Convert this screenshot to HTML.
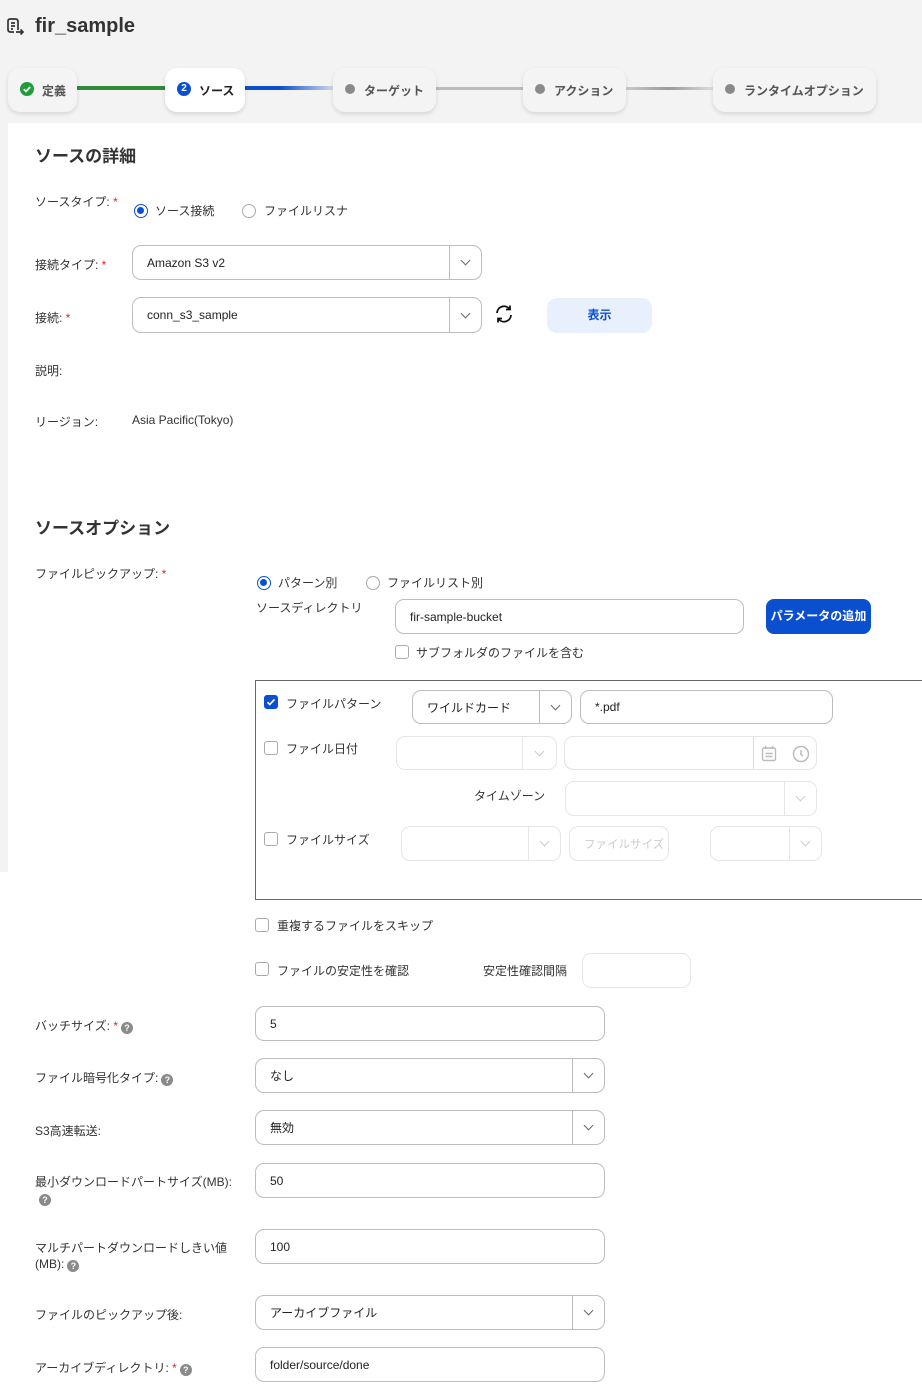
<!DOCTYPE html>
<html><head><meta charset="utf-8"><style>
*{box-sizing:border-box;margin:0;padding:0}
body{width:922px;height:1396px;position:relative;background:#fff;font-family:"Liberation Sans","Noto Sans CJK JP",sans-serif;color:#333;font-size:12px;overflow:hidden}
.a{position:absolute}
.lbl{position:absolute;font-size:12px;color:#333;white-space:nowrap;margin-top:-2px}
.req{color:#e0262b}
.box{position:absolute;border:1px solid #bdbdbd;border-radius:9px;background:#fff;font-size:12px;color:#222;padding-left:14px;display:flex;align-items:center;white-space:nowrap;overflow:hidden}
.dd{position:absolute;right:0;top:0;bottom:0;width:32px;border-left:1px solid #bdbdbd;display:flex;align-items:center;justify-content:center}
.dd:after{content:"";width:6px;height:6px;border-right:1.5px solid #666;border-bottom:1.5px solid #666;transform:rotate(45deg);margin-top:-4px}
.dis{border-color:#e6e6e6}
.dis .dd{border-left-color:#e6e6e6}
.dis .dd:after{border-color:#ccc}
.rad{position:absolute;width:14px;height:14px;border-radius:50%;border:1px solid #aaa;background:#fff}
.rad.on{border:1.5px solid #0b4fd1}
.rad.on:after{content:"";position:absolute;left:2px;top:2px;width:7px;height:7px;border-radius:50%;background:#0b4fd1}
.cb{position:absolute;width:14px;height:14px;border:1px solid #aaa;border-radius:3px;background:#fff}
.cb.on{background:#0b4fd1;border-color:#0b4fd1}
.q{display:inline-block;width:12px;height:12px;border-radius:50%;background:#8a8a8a;color:#fff;font-size:9px;font-weight:bold;text-align:center;line-height:12px;vertical-align:-1px;margin-left:3px}
.step{position:absolute;top:68px;height:44px;border-radius:12px;background:#f4f4f4;box-shadow:0 2px 5px rgba(0,0,0,.12);display:flex;align-items:center;padding-left:12px;font-size:12px;font-weight:bold;color:#555}
.dot{width:10px;height:10px;border-radius:50%;background:#8a8a8a;margin-right:9px;margin-top:-3px}
h2{position:absolute;font-size:17px;font-weight:bold;color:#333;margin-top:-2px}
</style></head><body>
<div class="a" style="left:0;top:0;width:922px;height:123px;background:#f3f3f3"></div>
<div class="a" style="left:0;top:123px;width:8px;height:749px;background:#f3f3f3"></div>
<svg class="a" style="left:6px;top:17px" width="20" height="20" viewBox="0 0 20 20" fill="none" stroke="#333" stroke-width="1.7"><path d="M12 13V4.5Q12 2 9.5 2H4Q2 2 2 4.5v8Q2 15 4.5 15H8"/><path d="M5 6h4M5 9h4M5 12h2"/><path d="M10 15h7M14.5 12.5L17 15l-2.5 2.5"/></svg>
<div class="a" style="left:35px;top:15px;font-size:20px;font-weight:bold;color:#333">fir_sample</div>
<div class="a" style="left:76px;top:86px;width:90px;height:4px;background:#2e8b3a"></div>
<div class="a" style="left:244px;top:86px;width:90px;height:4px;background:linear-gradient(90deg,#0b4fd1,#0b4fd1 40%,#d6dbe5)"></div>
<div class="a" style="left:434px;top:87px;width:90px;height:3px;background:#bbb"></div>
<div class="a" style="left:625px;top:87px;width:88px;height:3px;background:linear-gradient(90deg,#ccc,#999,#ddd)"></div>
<div class="step" style="left:8px;width:69px"><svg width="14" height="14" viewBox="0 0 14 14" style="margin-right:8px;margin-top:-3px"><circle cx="7" cy="7" r="7" fill="#1f9d3b"/><path d="M3.8 7.2l2.2 2.1 4.2-4.3" stroke="#fff" stroke-width="1.8" fill="none"/></svg>定義</div>
<div class="step" style="left:165px;width:80px;background:#fff;color:#222"><span style="width:14px;height:14px;border-radius:50%;background:#0b4fd1;color:#fff;font-size:10px;text-align:center;line-height:14px;margin-right:8px;margin-top:-3px">2</span>ソース</div>
<div class="step" style="left:333px;width:103px"><span class="dot"></span>ターゲット</div>
<div class="step" style="left:523px;width:103px"><span class="dot"></span>アクション</div>
<div class="step" style="left:713px;width:163px"><span class="dot"></span>ランタイムオプション</div>

<h2 style="left:35px;top:144px">ソースの詳細</h2>
<div class="lbl" style="left:35px;top:195px">ソースタイプ: <span class="req">*</span></div>
<div class="rad on" style="left:134px;top:204px"></div><div class="lbl" style="left:155px;top:204px">ソース接続</div>
<div class="rad" style="left:242px;top:204px"></div><div class="lbl" style="left:264px;top:204px">ファイルリスナ</div>
<div class="lbl" style="left:35px;top:258px">接続タイプ: <span class="req">*</span></div>
<div class="box" style="left:132px;top:245px;width:350px;height:35px">Amazon S3 v2<div class="dd"></div></div>
<div class="lbl" style="left:35px;top:311px">接続: <span class="req">*</span></div>
<div class="box" style="left:132px;top:297px;width:350px;height:36px">conn_s3_sample<div class="dd"></div></div>
<svg class="a" style="left:494px;top:304px" width="20" height="20" viewBox="0 0 20 20" fill="none" stroke="#111" stroke-width="1.8"><path d="M3 9a7 7 0 0 1 12.5-4M17 11a7 7 0 0 1-12.5 4"/><path d="M16 1.5v4h-4M4 18.5v-4h4"/></svg>
<div class="a" style="left:547px;top:298px;width:105px;height:35px;border-radius:10px;background:#e8f0fd;color:#0b4fd1;font-weight:bold;text-align:center;line-height:34px">表示</div>
<div class="lbl" style="left:35px;top:364px">説明:</div>
<div class="lbl" style="left:35px;top:415px">リージョン:</div>
<div class="lbl" style="left:132px;top:415px">Asia Pacific(Tokyo)</div>

<h2 style="left:35px;top:516px">ソースオプション</h2>
<div class="lbl" style="left:35px;top:567px">ファイルピックアップ: <span class="req">*</span></div>
<div class="rad on" style="left:257px;top:576px"></div><div class="lbl" style="left:278px;top:576px">パターン別</div>
<div class="rad" style="left:366px;top:576px"></div><div class="lbl" style="left:387px;top:576px">ファイルリスト別</div>
<div class="lbl" style="left:256px;top:601px">ソースディレクトリ</div>
<div class="box" style="left:395px;top:599px;width:349px;height:35px">fir-sample-bucket</div>
<div class="a" style="left:766px;top:599px;width:105px;height:35px;border-radius:8px;background:#0b4fd1;color:#fff;font-weight:bold;font-size:12px;text-align:center;line-height:34px">パラメータの追加</div>
<div class="cb" style="left:395px;top:645px"></div><div class="lbl" style="left:416px;top:646px">サブフォルダのファイルを含む</div>

<div class="a" style="left:255px;top:680px;width:680px;height:220px;border:1px solid #666;border-right:none"></div>
<div class="cb on" style="left:264px;top:695px"><svg width="12" height="12" viewBox="0 0 12 12" style="position:absolute;left:0;top:0"><path d="M2.5 6.2l2.3 2.2 4.7-5" stroke="#fff" stroke-width="1.7" fill="none"/></svg></div>
<div class="lbl" style="left:286px;top:697px">ファイルパターン</div>
<div class="box" style="left:412px;top:690px;width:160px;height:34px">ワイルドカード<div class="dd"></div></div>
<div class="box" style="left:580px;top:690px;width:253px;height:34px">*.pdf</div>
<div class="cb" style="left:264px;top:741px"></div><div class="lbl" style="left:286px;top:742px">ファイル日付</div>
<div class="box dis" style="left:396px;top:736px;width:161px;height:34px"><div class="dd" style="width:34px"></div></div>
<div class="box dis" style="left:564px;top:736px;width:253px;height:34px"><div class="a" style="left:0;top:0;width:189px;height:33px;border-right:1px solid #ddd;border-radius:9px 0 0 9px;box-shadow:inset 0 -1px 0 #ddd"></div>
<svg class="a" style="left:196px;top:8px" width="16" height="17" viewBox="0 0 16 17" fill="none" stroke="#bbb" stroke-width="1.4"><rect x="1.5" y="3" width="13" height="12.5" rx="1.5"/><path d="M4.5 1v3M11.5 1v3M4.5 8.5h7M4.5 11.5h7"/></svg>
<svg class="a" style="left:227px;top:8px" width="18" height="18" viewBox="0 0 18 18" fill="none" stroke="#bbb" stroke-width="1.5"><circle cx="9" cy="9" r="7.5"/><path d="M9 5v4.5l2 1.5"/></svg></div>
<div class="lbl" style="left:474px;top:789px">タイムゾーン</div>
<div class="box dis" style="left:565px;top:781px;width:252px;height:35px"><div class="dd"></div></div>
<div class="cb" style="left:264px;top:832px"></div><div class="lbl" style="left:286px;top:833px">ファイルサイズ</div>
<div class="box dis" style="left:401px;top:826px;width:160px;height:35px"><div class="dd"></div></div>
<div class="box dis" style="left:569px;top:826px;width:100px;height:35px;color:#ccc;font-size:11.5px">ファイルサイズ</div>
<div class="box dis" style="left:710px;top:826px;width:112px;height:35px"><div class="dd"></div></div>

<div class="cb" style="left:255px;top:918px"></div><div class="lbl" style="left:277px;top:919px">重複するファイルをスキップ</div>
<div class="cb" style="left:255px;top:962px"></div><div class="lbl" style="left:277px;top:964px">ファイルの安定性を確認</div>
<div class="lbl" style="left:483px;top:964px">安定性確認間隔</div>
<div class="box dis" style="left:582px;top:953px;width:109px;height:35px"></div>

<div class="lbl" style="left:35px;top:1019px">バッチサイズ: <span class="req">*</span><span class="q">?</span></div>
<div class="box" style="left:255px;top:1006px;width:350px;height:35px">5</div>
<div class="lbl" style="left:35px;top:1071px">ファイル暗号化タイプ:<span class="q">?</span></div>
<div class="box" style="left:255px;top:1058px;width:350px;height:35px">なし<div class="dd"></div></div>
<div class="lbl" style="left:35px;top:1124px">S3高速転送:</div>
<div class="box" style="left:255px;top:1110px;width:350px;height:35px">無効<div class="dd"></div></div>
<div class="lbl" style="left:35px;top:1176px;line-height:16px">最小ダウンロードパートサイズ(MB):<br><span class="q" style="margin-left:4px">?</span></div>
<div class="box" style="left:255px;top:1163px;width:350px;height:35px">50</div>
<div class="lbl" style="left:35px;top:1242px;line-height:16px">マルチパートダウンロードしきい値<br>(MB):<span class="q">?</span></div>
<div class="box" style="left:255px;top:1229px;width:350px;height:35px">100</div>
<div class="lbl" style="left:35px;top:1308px">ファイルのピックアップ後:</div>
<div class="box" style="left:255px;top:1295px;width:350px;height:35px">アーカイブファイル<div class="dd"></div></div>
<div class="lbl" style="left:35px;top:1361px">アーカイブディレクトリ: <span class="req">*</span><span class="q">?</span></div>
<div class="box" style="left:255px;top:1347px;width:350px;height:35px">folder/source/done</div>
</body></html>
